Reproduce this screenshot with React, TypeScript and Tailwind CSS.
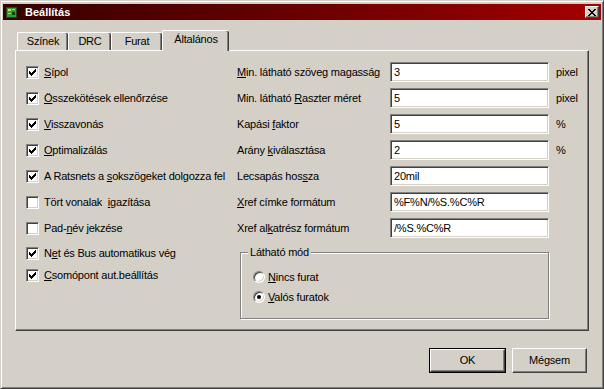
import React from 'react';

const face = 'bg-[#d4d0c8]';

// classic 7x7 check glyph
const Tick = () => {
    const tops = [2, 3, 4, 3, 2, 1, 0];
    return (
        <svg width="7" height="7" viewBox="0 0 7 7" shapeRendering="crispEdges">
            {tops.map((t, i) => <rect key={i} x={i} y={t} width="1" height="3" fill="#000" />)}
        </svg>
    );
};

const CheckBox = ({ checked, children }: { checked: boolean; children: React.ReactNode }) => (
    <div className="flex items-center gap-[5px]">
        <span className="w-[13px] h-[13px] shrink-0 bg-white border border-t-[#808080] border-l-[#808080] border-r-white border-b-white shadow-[inset_1px_1px_0_#404040,inset_-1px_-1px_0_#d4d0c8] flex items-center justify-center">
            {checked && <Tick />}
        </span>
        <span className="whitespace-pre">{children}</span>
    </div>
);

const Radio = ({ checked, children }: { checked: boolean; children: React.ReactNode }) => (
    <div className="flex items-center gap-[3px] h-[20px]">
        <span className="w-[12px] h-[12px] shrink-0 rounded-full bg-white border border-t-[#808080] border-l-[#808080] border-r-white border-b-white shadow-[inset_1px_1px_0_#404040,inset_-1px_-1px_0_#d4d0c8] flex items-center justify-center">
            {checked && <span className="w-[4px] h-[4px] rounded-full bg-black" />}
        </span>
        <span>{children}</span>
    </div>
);

const Field = ({ label, value, unit }: { label: React.ReactNode; value: string; unit?: string }) => (
    <div className="flex items-center h-[26px]">
        <span className="w-[153px] shrink-0 whitespace-nowrap">{label}</span>
        <div className="w-[159px] h-[20px] bg-white border border-t-[#808080] border-l-[#808080] border-r-white border-b-white shadow-[inset_1px_1px_0_#404040,inset_-1px_-1px_0_#d4d0c8] flex items-center pl-[3px]">
            {value}
        </div>
        {unit && <span className="ml-[7px]">{unit}</span>}
    </div>
);

const Tab = ({ label, width, active }: { label: string; width: number; active?: boolean }) => (
    <div
        className={
            active
                ? 'relative z-10 h-[21px] -mb-[1px] mx-[0px] flex items-center justify-center bg-[#d4d0c8] border-t border-l border-t-white border-l-white rounded-tl-[2px] rounded-tr-[2px] shadow-[inset_-1px_0_0_#404040,inset_-2px_0_0_#808080] pb-[3px]'
                : 'h-[18px] flex items-center justify-center bg-[#d4d0c8] border-t border-l border-t-white border-l-white rounded-tl-[2px] rounded-tr-[2px] shadow-[inset_-1px_0_0_#404040,inset_-2px_0_0_#808080]'
        }
        style={{ width }}
    >
        {label}
    </div>
);

const Button = ({ label, isDefault }: { label: string; isDefault?: boolean }) => (
    <div className={isDefault ? 'w-[77px] h-[25px] border border-black' : 'w-[75px] h-[25px]'}>
        <div className="w-full h-full flex items-center justify-center bg-[#d4d0c8] border border-t-white border-l-white border-r-[#404040] border-b-[#404040] shadow-[inset_-1px_-1px_0_#808080]">
            {label}
        </div>
    </div>
);

export default function App() {
    return (
        <div className={`w-[604px] h-[389px] ${face} border border-t-[#d4d0c8] border-l-[#d4d0c8] border-r-[#404040] border-b-[#404040] shadow-[inset_1px_1px_0_#fff,inset_-1px_-1px_0_#808080] p-[2px] flex flex-col font-['Liberation_Sans',Arial,sans-serif] text-[11px] leading-[13px] tracking-[-0.2px] text-black select-none`}>
            {/* Title bar */}
            <div className="mt-[1px] h-[16px] shrink-0 flex items-center bg-gradient-to-r from-[#360000] via-[#6a0000] to-[#a40000] pl-[3px] pr-[2px]">
                <svg width="11" height="11" viewBox="0 0 11 11" shapeRendering="crispEdges">
                    <rect x="0" y="0" width="11" height="11" fill="#1c4a1c" />
                    <rect x="1" y="1" width="9" height="9" fill="#2fa02f" />
                    <rect x="2" y="2" width="3" height="2" fill="#e0e040" />
                    <rect x="6" y="5" width="3" height="3" fill="#104010" />
                    <rect x="2" y="6" width="3" height="1" fill="#c0c0c0" />
                    <rect x="6" y="2" width="3" height="1" fill="#c0c0c0" />
                </svg>
                <span className="ml-[8px] text-white font-bold tracking-[0px]">Beállítás</span>
                <div className="ml-auto w-[14px] h-[12px] bg-[#d4d0c8] border border-t-white border-l-white border-r-[#404040] border-b-[#404040] shadow-[inset_-1px_-1px_0_#808080] flex items-center justify-center">
                    <svg width="8" height="7" viewBox="0 0 8 7" shapeRendering="crispEdges">
                        <path d="M0 0h2v1h1v1h2V1h1V0h2v1H7v1H6v1H5v1h1v1h1v1h1v1H6V6H5V5H3v1H2v1H0V6h1V5h1V4h1V3H2V2H1V1H0z" fill="#000" />
                    </svg>
                </div>
            </div>

            {/* Tabs + panel */}
            <div className="ml-[12px] mr-[12px] mt-[10px] flex flex-col">
                <div className="h-[20px] flex items-end pl-[2px]">
                    <Tab label="Színek" width={51} />
                    <Tab label="DRC" width={43} />
                    <Tab label="Furat" width={51} />
                    <Tab label="Általános" width={67} active />
                </div>
                <div className="h-[281px] border border-t-white border-l-white border-r-[#404040] border-b-[#404040] shadow-[inset_-1px_-1px_0_#808080] pl-[10px] pt-[8px] flex">
                    {/* Left column */}
                    <div className="w-[211px] shrink-0 flex flex-col">
                        <div className="h-[26px] flex items-center"><CheckBox checked><u>S</u>ípol</CheckBox></div>
                        <div className="h-[26px] flex items-center"><CheckBox checked><u>Ö</u>sszekötések ellenőrzése</CheckBox></div>
                        <div className="h-[26px] flex items-center"><CheckBox checked><u>V</u>isszavonás</CheckBox></div>
                        <div className="h-[26px] flex items-center"><CheckBox checked><u>O</u>ptimalizálás</CheckBox></div>
                        <div className="h-[26px] flex items-center"><CheckBox checked>A Ratsnets a <u>s</u>okszögeket dolgozza fel</CheckBox></div>
                        <div className="h-[26px] flex items-center"><CheckBox checked={false}>Tört vonalak  <u>i</u>gazítása</CheckBox></div>
                        <div className="h-[26px] flex items-center"><CheckBox checked={false}>Pad-<u>n</u>év jekzése</CheckBox></div>
                        <div className="h-[24px] flex items-center"><CheckBox checked>N<u>e</u>t és Bus automatikus vég</CheckBox></div>
                        <div className="h-[20px] flex items-center"><CheckBox checked><u>C</u>somópont aut.beállítás</CheckBox></div>
                    </div>

                    {/* Right column */}
                    <div className="flex flex-col">
                        <Field label={<><u>M</u>in. látható szöveg magasság</>} value="3" unit="pixel" />
                        <Field label={<>Min. látható <u>R</u>aszter méret</>} value="5" unit="pixel" />
                        <Field label={<>Kapási <u>f</u>aktor</>} value="5" unit="%" />
                        <Field label={<>Arány <u>k</u>iválasztása</>} value="2" unit="%" />
                        <Field label={<>Lecsapás hos<u>s</u>za</>} value="20mil" />
                        <Field label={<><u>X</u>ref címke formátum</>} value="%F%N/%S.%C%R" />
                        <Field label={<>Xref al<u>k</u>atrész formátum</>} value="/%S.%C%R" />

                        <fieldset className="ml-[3px] mt-[5px] w-[309px] h-[73px] border border-[#808080] shadow-[1px_1px_0_#fff,inset_1px_1px_0_#fff] px-[7px]">
                            <legend className="px-[2px] bg-[#d4d0c8]">Látható mód</legend>
                            <div className="ml-[5px] mt-[8px] flex flex-col">
                                <Radio checked={false}><u>N</u>incs furat</Radio>
                                <Radio checked><u>V</u>alós furatok</Radio>
                            </div>
                        </fieldset>
                    </div>
                </div>
            </div>

            {/* Buttons */}
            <div className="mt-[17px] pr-[14px] flex justify-end gap-[6px]">
                <Button label="OK" isDefault />
                <Button label="Mégsem" />
            </div>
        </div>
    );
}
